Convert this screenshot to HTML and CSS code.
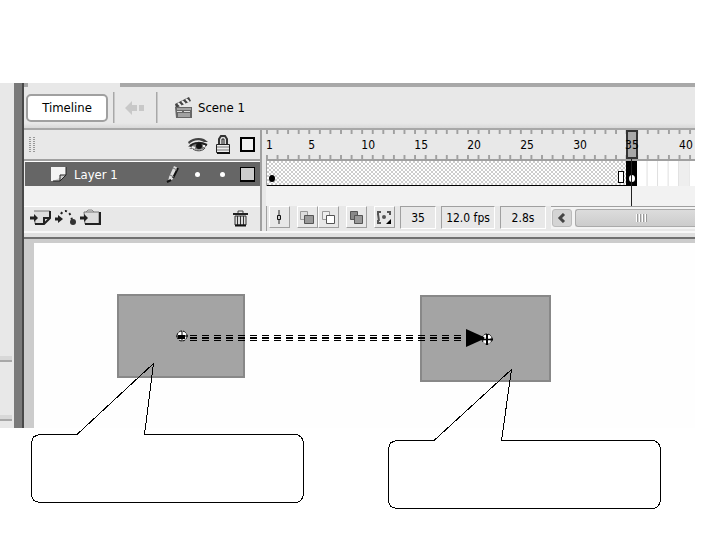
FILE: index.html
```
<!DOCTYPE html>
<html lang="en">
<head>
    <meta charset="UTF-8">
    <meta name="viewport" content="width=device-width, initial-scale=1.0">
    <title>Timeline</title>
    <link rel="stylesheet" href="styles.css">
</head>
<body>
    <div class="app">
        <div class="side-panel">
            <div class="side-section side-main"></div>
            <div class="side-section side-small"></div>
        </div>
        <div class="splitter"></div>

        <div class="workspace">
            <div class="tab-strip"><div class="tab-active"></div></div>

            <div class="toolbar">
                <button class="timeline-button">Timeline</button>
                <span class="divider"></span>
                <button class="icon-button back-button" aria-label="Back">
                    <svg width="20" height="16" viewBox="0 0 20 16"><path d="M0 8L7 1V5H12V11H7V15ZM14 5H19V11H14Z" fill="#c8c8c8"/></svg>
                </button>
                <span class="divider"></span>
                <div class="scene">
                    <svg width="20" height="24" viewBox="0 0 20 24">
                        <path d="M1 8L15 1L17 5L2 12Z" fill="#444"/>
                        <path d="M4 7l3 3M8 5l3 3M12 3l3 3" stroke="#eee" stroke-width="2"/>
                        <path d="M1 11H18V22H2Z" fill="#666"/>
                        <path d="M3 13H17M3 15.500H8M10 15.500H16M4 18H16M4 20H16" stroke="#ddd"/>
                    </svg>
                    <span>Scene 1</span>
                </div>
            </div>

            <div class="timeline">
                <div class="layers">
                    <div class="layers-header">
                        <span class="grip"></span>
                        <span class="cell">
                            <svg width="22" height="16" viewBox="0 0 22 16">
                                <path d="M1 5C5 1 12 0 17 2L21 5L17 5C12 2 6 3 2 7Z" fill="#444"/>
                                <path d="M1 10C5 5 13 4 20 8C18 12 13 14 7 12L2 12L5 10Z" fill="#777"/>
                                <path d="M3 9C7 5 14 5 20 8" fill="none" stroke="#222" stroke-width="2"/>
                                <circle cx="12" cy="9" r="3" fill="#111"/>
                                <path d="M5 10l3 1M16 9l2 0" stroke="#eee" stroke-width="2"/>
                                <path d="M6 12C10 15 16 14 18 11" fill="none" stroke="#444"/>
                            </svg>
                        </span>
                        <span class="cell">
                            <svg width="16" height="20" viewBox="0 0 16 20">
                                <path d="M4 10V4L6 1H10L12 4V10" fill="#ddd" stroke="#333" stroke-width="2"/>
                                <path d="M7 9V4H9V9" fill="none" stroke="#222"/>
                                <path d="M1.500 9.500H14.500V17.500H1.500Z" fill="#eee" stroke="#222"/>
                                <path d="M2 12H14M2 15H14" stroke="#777"/>
                                <path d="M2 18H15" stroke="#111" stroke-width="2"/>
                            </svg>
                        </span>
                        <span class="cell"><span class="outline-box"></span></span>
                    </div>

                    <div class="layer-row">
                        <svg class="page-icon" width="18" height="16" viewBox="0 0 18 16">
                            <path d="M1 1H16V9L10 15H1Z" fill="#f4f4f4"/>
                            <path d="M16 1V9L10 15V9H16M16 9L10 15H3" fill="#ccc" stroke="#222"/>
                        </svg>
                        <span class="layer-name">Layer 1</span>
                        <span class="cell">
                            <svg width="14" height="18" viewBox="0 0 14 18">
                                <path d="M3 12L8 1L12 3L7 14L2 17Z" fill="#ddd"/>
                                <path d="M7 13L12 3M1 17L5 15" stroke="#111" stroke-width="2"/>
                                <path d="M4 10L8 12M7 3L11 5" stroke="#777"/>
                            </svg>
                        </span>
                        <span class="cell"><span class="dot"></span></span>
                        <span class="cell"><span class="dot"></span></span>
                        <span class="cell"><span class="outline-box filled"></span></span>
                    </div>

                    <div class="empty-rows"></div>

                    <div class="layers-footer">
                        <button class="icon-button" aria-label="Insert Layer">
                            <svg width="21" height="18" viewBox="0 0 21 18">
                                <path d="M4 2H20V9L14 15H5V12" fill="#ddd" stroke="#777"/>
                                <path d="M20 2V9L14 15H5M14 15V9H20" fill="none" stroke="#222" stroke-width="2"/>
                                <path d="M0 9H6" stroke="#222" stroke-width="3"/>
                                <path d="M4 5L8 9L4 13Z" fill="#222"/>
                            </svg>
                        </button>
                        <button class="icon-button" aria-label="Add Motion Guide">
                            <svg width="21" height="18" viewBox="0 0 21 18">
                                <path d="M0 10H5" stroke="#222" stroke-width="3"/>
                                <path d="M3 6L8 10L3 14Z" fill="#222"/>
                                <path d="M6 5C9 0 15 1 17 11" fill="none" stroke="#222" stroke-width="2" stroke-dasharray="2 3"/>
                                <circle cx="18" cy="13" r="3" fill="#333"/>
                            </svg>
                        </button>
                        <button class="icon-button" aria-label="Insert Layer Folder">
                            <svg width="21" height="18" viewBox="0 0 21 18">
                                <path d="M6 3L8 1H12L14 3" fill="#ddd" stroke="#888"/>
                                <path d="M4 3H19V15H5Z" fill="#ddd" stroke="#777"/>
                                <path d="M20 3V15H5" fill="none" stroke="#222" stroke-width="2"/>
                                <path d="M0 9H6" stroke="#222" stroke-width="3"/>
                                <path d="M4 5L8 9L4 13Z" fill="#222"/>
                            </svg>
                        </button>
                        <button class="icon-button trash" aria-label="Delete Layer">
                            <svg width="17" height="17" viewBox="0 0 17 17">
                                <path d="M6 3V1H11V3" fill="none" stroke="#444"/>
                                <path d="M1 4H16" stroke="#222" stroke-width="2"/>
                                <path d="M3 6H14V15H3Z" fill="#ddd" stroke="#333"/>
                                <path d="M5.500 6V15M8.500 6V15M11.500 6V15" stroke="#333"/>
                                <path d="M3 15.500H14" stroke="#111" stroke-width="2"/>
                            </svg>
                        </button>
                    </div>
                </div>

                <div class="frames">
                    <div class="ruler">
                        <span class="frame-1">1</span>
                        <span class="frame-5">5</span>
                        <span class="frame-10">10</span>
                        <span class="frame-15">15</span>
                        <span class="frame-20">20</span>
                        <span class="frame-25">25</span>
                        <span class="frame-30">30</span>
                        <span class="frame-35">35</span>
                        <span class="frame-40">40</span>
                    </div>

                    <div class="frame-row">
                        <div class="tween">
                            <span class="keyframe"></span>
                            <span class="end-frame"></span>
                        </div>
                        <div class="current-frame"><span class="keyframe"></span></div>
                        <div class="blank-frames"></div>
                    </div>

                    <div class="empty-rows"></div>

                    <div class="status-bar">
                        <div class="tools">
                            <button class="tool-button" aria-label="Center Frame">
                                <svg width="20" height="20" viewBox="0 0 20 20"><path d="M10 3V17" stroke="#222"/><path d="M8.500 8.500H11.500V12.500H8.500Z" fill="#ccc" stroke="#111"/></svg>
                            </button>
                            <div class="button-pair">
                                <button class="tool-button" aria-label="Onion Skin">
                                    <svg width="20" height="20" viewBox="0 0 20 20"><path d="M3.500 4.500H10.500V12.500H3.500Z" fill="#ddd" stroke="#999"/><path d="M7.500 8.500H16.500V16.500H7.500Z" fill="#999" stroke="#555"/></svg>
                                </button>
                                <button class="tool-button" aria-label="Onion Skin Outlines">
                                    <svg width="20" height="20" viewBox="0 0 20 20"><path d="M4.500 4.500H11.500V12.500H4.500Z" fill="#eee" stroke="#999"/><path d="M8.500 8.500H16.500V16.500H8.500Z" fill="#fff" stroke="#555"/></svg>
                                </button>
                            </div>
                            <button class="tool-button" aria-label="Edit Multiple Frames">
                                <svg width="20" height="20" viewBox="0 0 20 20"><path d="M4.500 4.500H11.500V12.500H4.500Z" fill="#888" stroke="#555"/><path d="M8.500 8.500H16.500V16.500H8.500Z" fill="#999" stroke="#555"/></svg>
                            </button>
                            <button class="tool-button" aria-label="Modify Onion Markers">
                                <svg width="20" height="20" viewBox="0 0 20 20"><path d="M7 5H4V8M4 13V16H7M13 5H16V8M4 7L5 14" fill="none" stroke="#555" stroke-width="2"/><circle cx="10" cy="10" r="2" fill="#555"/><path d="M17 12V17H12Z" fill="#000"/></svg>
                            </button>
                        </div>
                        <output class="readout readout-frame">35</output>
                        <output class="readout readout-fps">12.0 fps</output>
                        <output class="readout readout-time">2.8s</output>
                        <div class="scrollbar">
                            <button class="scroll-left" aria-label="Scroll left">
                                <svg width="10" height="10" viewBox="0 0 10 10"><path d="M7 1L3 5L7 9" fill="none" stroke="#444" stroke-width="3"/></svg>
                            </button>
                            <div class="thumb"><span class="thumb-grip"></span></div>
                        </div>
                    </div>
                    <div class="playhead"></div>
                </div>
            </div>

            <div class="stage-area">
                <div class="stage"></div>
            </div>
        </div>
    </div>

    <!-- tweened symbols, motion path and the two callouts -->
    <svg class="diagram" width="720" height="540" viewBox="0 0 720 540">
        <g fill="#a4a4a4" stroke="#888" stroke-width="2">
            <rect x="118" y="295" width="126" height="82"/>
            <rect x="421" y="296" width="129" height="85"/>
        </g>
        <g stroke="#000" stroke-dasharray="7 5" shape-rendering="crispEdges">
            <path d="M190 335.500H464"/>
            <path d="M190 338H464" stroke-width="2"/>
            <path d="M190 340.500H464"/>
        </g>
        <g>
            <circle cx="182" cy="336" r="5" fill="#fff" stroke="#000" stroke-dasharray="3 1"/>
            <path d="M182 331V341M176 336H188" stroke="#000"/>
            <path d="M178 337H185" stroke="#000" stroke-width="4"/>
        </g>
        <g>
            <circle cx="487" cy="339" r="5" fill="#fff" stroke="#000" stroke-dasharray="3 1"/>
            <path d="M466 329L486 338L466 347Z"/>
            <path d="M487 334V345M482 339.500H493" stroke="#000" stroke-width="2"/>
            <path d="M485 335V344M489 335V344" stroke="#fff"/>
            <path d="M482 339.500H493" stroke="#000"/>
        </g>
        <g fill="none" stroke="#000" shape-rendering="crispEdges">
            <path d="M77 434.500L153.500 363.500L144.500 434.500H294Q303.500 434.500 303.500 444V493Q303.500 502.500 294 502.500H41Q31.500 502.500 31.500 493V444Q31.500 434.500 41 434.500Z"/>
            <path d="M434 440.500L511.500 369.500L501.500 440.500H651Q660.500 440.500 660.500 450V499Q660.500 508.500 651 508.500H398Q388.500 508.500 388.500 499V450Q388.500 440.500 398 440.500Z"/>
        </g>
        <g stroke="#fff" shape-rendering="crispEdges">
            <path d="M78 434.500H144"/>
            <path d="M435 440.500H501"/>
        </g>
    </svg>
</body>
</html>
```

FILE: styles.css
```
* {
    box-sizing: border-box;
}
body {
    position: relative;
    min-height: 100vh;
    margin: 0;
    padding: 83px 25px 0 0;
    background: #fff;
    color: #000;
    font-family: "DejaVu Sans Condensed", "DejaVu Sans", sans-serif;
    font-size: 13px;
}
button {
    margin: 0;
    padding: 0;
    font: inherit;
    color: inherit;
}
svg {
    display: block;
}
.app {
    display: flex;
}

/* left side */
.side-panel {
    display: flex;
    flex-direction: column;
    width: 14px;
    padding-right: 2px;
    background: #e8e8e8;
}
.side-section {
    border-bottom: 2px solid #a8a8a8;
    background: linear-gradient(#e8e8e8, #e8e8e8) 0 0 / 100% calc(100% - 4px) no-repeat #d8d8d8;
}
.side-main {
    flex: 1;
}
.side-small {
    height: 59px;
    margin-bottom: 7px;
}
.splitter {
    width: 10px;
    background: #7a7a7a;
    border-right: 2px solid #484848;
}
.workspace {
    flex: 1;
    min-width: 0;
    background: #e8e8e8;
}

/* scene bar */
.tab-strip {
    height: 4px;
    padding-left: 4px;
    background: #a8a8a8;
}
.tab-active {
    width: 92px;
    height: 4px;
    background: #e8e8e8;
}
.toolbar {
    display: flex;
    align-items: center;
    gap: 5px;
    height: 43px;
    padding-left: 2px;
    border-bottom: 2px solid #a8a8a8;
    background: linear-gradient(#e8e8e8 88%, #d8d8d8);
}
.timeline-button {
    width: 82px;
    height: 28px;
    border: 2px solid #a0a0a0;
    border-radius: 5px;
    background: #fff;
}
.divider {
    width: 2px;
    height: 31px;
    background: #a8a8a8;
    border-right: 1px solid #c8c8c8;
}
.icon-button {
    border: none;
    background: none;
}
.back-button {
    margin: 0 6px 0 5px;
}
.scene {
    display: flex;
    align-items: center;
    gap: 4px;
    margin-left: 11px;
}

/* layer list */
.timeline {
    display: grid;
    grid-template-columns: 236px 1fr;
    border-bottom: 2px solid #707070;
    padding-bottom: 6px;
    background: linear-gradient(#e0e0e0, #e0e0e0) 0 100% / 100% 4px no-repeat #f8f8f8;
}
.layers-header,
.layer-row,
.layers-footer {
    display: flex;
    align-items: center;
}
.layers-header {
    height: 31px;
    border-bottom: 2px solid #a0a0a0;
    background: #e8e8e8;
}
.grip {
    width: 6px;
    height: 16px;
    margin: 0 auto 0 5px;
    background: repeating-linear-gradient(transparent 0 1px, #e8e8e8 1px 2px), repeating-linear-gradient(90deg, #999 0 2px, #e8e8e8 2px 4px);
}
.cell {
    display: flex;
    align-items: center;
    justify-content: center;
    width: 25px;
}
.outline-box {
    width: 15px;
    height: 15px;
    border: 2px solid #000;
    background: #f2f2f2;
}
.outline-box.filled {
    border-width: 1px 1px 2px;
    background: #ccc;
}
.layer-row {
    height: 25px;
    padding-left: 25px;
    border-top: 1px solid #fff;
    border-left: 1px solid #e8e8e8;
    background: #666;
    color: #fff;
}
.layer-name {
    margin: 0 auto 0 6px;
}
.dot {
    width: 5px;
    height: 5px;
    border-radius: 50%;
    background: #fff;
}
.empty-rows {
    height: 20px;
    background: #f2f2f2;
}
.layers-footer {
    gap: 4px;
    height: 25px;
    padding: 0 11px 2px 6px;
    border-top: 1px solid #fff;
    background: #e8e8e8;
}
.trash {
    margin-left: auto;
}

/* frames */
.frames {
    position: relative;
    min-width: 0;
    padding-left: 4px;
    border-left: 2px solid #a0a0a0;
    background: #e8e8e8;
}
/* each frame spans two columns, the last one is cut in half */
.ruler {
    display: grid;
    grid-template-columns: repeat(81, minmax(0, 1fr));
    align-items: center;
    height: 31px;
    border-bottom: 2px solid #a0a0a0;
    background:
        linear-gradient(90deg, #a0a0a0 2px, transparent 2px) 0 0 / calc(100% * 2 / 81) 4px repeat-x,
        linear-gradient(90deg, #a0a0a0 2px, transparent 2px) 0 100% / calc(100% * 2 / 81) 4px repeat-x;
    font-size: 12px;
}
.ruler span {
    grid-row: 1;
    white-space: nowrap;
}
.frame-1 { grid-column: 1 / span 2; }
.frame-5 { grid-column: 9 / span 2; }
.frame-10 { grid-column: 19 / span 2; }
.frame-15 { grid-column: 29 / span 2; }
.frame-20 { grid-column: 39 / span 2; }
.frame-25 { grid-column: 49 / span 2; }
.frame-30 { grid-column: 59 / span 2; }
.frame-35 { grid-column: 69 / span 2; }
.frame-40 { grid-column: 79 / span 2; }
.ruler .frame-35 {
    display: flex;
    align-items: center;
    justify-content: center;
    height: 29px;
    margin-right: -1px;
    border: 2px solid #333;
    background: #a8a8a8;
}
.frame-row {
    display: grid;
    grid-template-columns: 68fr 2fr 11fr;
    height: 25px;
    border-left: 1px solid #a0a0a0;
}
.tween {
    display: flex;
    align-items: flex-end;
    justify-content: space-between;
    padding: 0 2px 2px;
    border-bottom: 1px solid #000;
    background: repeating-conic-gradient(#ccc 0 25%, #fff 0 50%) 0 0 / 4px 4px;
}
.keyframe {
    width: 6px;
    height: 7px;
    margin-bottom: 1px;
    border-radius: 50%;
    background: #000;
}
.end-frame {
    width: 6px;
    height: 12px;
    border: 1px solid #000;
    background: #fff;
}
.current-frame {
    display: flex;
    align-items: flex-end;
    justify-content: center;
    padding-bottom: 3px;
    background: #000;
}
.current-frame .keyframe {
    background: #fff;
}
.blank-frames {
    background:
        linear-gradient(#eee, #eee) 88% 0 / 18% 100% no-repeat,
        linear-gradient(90deg, transparent calc(100% - 1px), #ddd 0) 0 0 / calc(100% * 2 / 11) 100% #fff;
}
.playhead {
    position: absolute;
    top: 29px;
    left: calc(4px + (100% - 4px) * 69 / 81);
    width: 1px;
    height: 47px;
    background: #222;
}
.status-bar {
    display: flex;
    gap: 5px;
    height: 25px;
    padding-left: 2px;
    border-left: 1px solid #a0a0a0;
    font-size: 12px;
}
.tools {
    display: flex;
    gap: 7px;
}
.tool-button {
    width: 21px;
    height: 22px;
    border: 1px solid #fff;
    border-right-color: #a0a0a0;
    border-bottom-color: #a0a0a0;
    background: #e8e8e8;
}
.tool-button svg {
    margin: -1px;
}
.button-pair {
    display: flex;
}
.readout {
    display: flex;
    align-items: center;
    justify-content: center;
    height: 23px;
    border: 1px solid #fff;
    border-top-color: #a0a0a0;
    border-left-color: #a0a0a0;
    white-space: nowrap;
}
.readout-frame { width: 36px; }
.readout-fps { width: 54px; }
.readout-time { width: 46px; }
.scrollbar {
    display: flex;
    flex: 1;
    gap: 3px;
    height: 23px;
    padding: 2px 0 2px 1px;
    border-top: 1px solid #a0a0a0;
    background: #f4f4f4;
}
.scroll-left {
    display: flex;
    align-items: center;
    justify-content: center;
    width: 20px;
    border: 1px solid #bbb;
    border-radius: 3px;
    background: #d4d4d4;
}
.thumb {
    display: flex;
    flex: 1;
    align-items: center;
    justify-content: center;
    padding-left: 12px;
    border: 1px solid #aaa;
    border-right: none;
    border-radius: 3px 0 0 3px;
    background: linear-gradient(#dcdcdc, #ccc);
}
.thumb-grip {
    width: 11px;
    height: 8px;
    background: repeating-linear-gradient(90deg, #fff 0 1px, #999 1px 2px, transparent 2px 3px);
}

/* stage */
.stage-area {
    padding: 4px 0 0 10px;
    background: #ccc;
}
.stage {
    height: 185px;
    background: #fefefe;
}
.diagram {
    position: absolute;
    top: 0;
    left: 0;
    pointer-events: none;
}
```
